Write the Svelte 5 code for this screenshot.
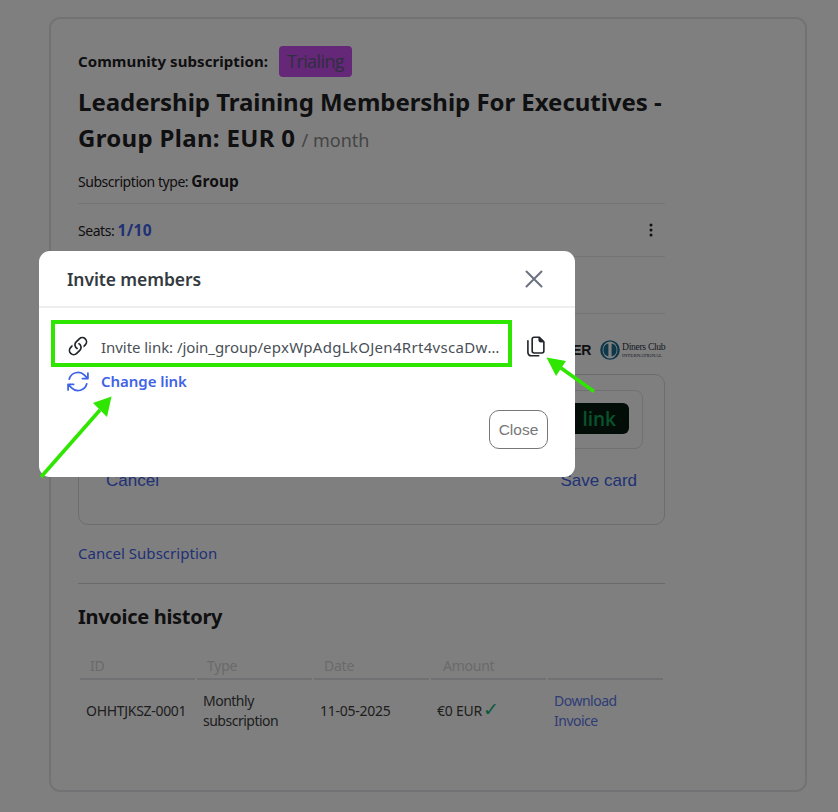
<script>
  const head = ['ID', 'Type', 'Date', 'Amount', ''];
</script>

<div class="page">
  <main class="card">
    <div class="status">
      <strong>Community subscription:</strong>
      <span class="badge">Trialing</span>
    </div>
    <h1>Leadership Training Membership For Executives - <span class="price">Group Plan: EUR 0</span> <small>/ month</small></h1>
    <p class="type">Subscription type: <strong>Group</strong></p>
    <div class="seats">
      <span>Seats: <a href="#seats">1/10</a></span>
      <svg class="dots" viewBox="0 0 4 14" width="4" height="14" aria-hidden="true"><circle cx="2" cy="2" r="1.5"/><circle cx="2" cy="7" r="1.5"/><circle cx="2" cy="12" r="1.5"/></svg>
    </div>
    <div class="blank"></div>
    <div class="brands">
      <span class="discover">DISCOVER</span>
      <span class="diners">
        <svg viewBox="0 0 22 20" width="22" height="20" aria-hidden="true">
          <circle cx="11" cy="10" r="9.8" fill="#1c6f93"/>
          <ellipse cx="11" cy="10" rx="7.4" ry="8.6" fill="#fff"/>
          <path d="M9.4 3.6a6.6 6.6 0 0 0 0 12.8zM12.6 3.6a6.6 6.6 0 0 1 0 12.8z" fill="#1c6f93"/>
        </svg>
        <span class="dtext"><b>Diners Club</b><i>INTERNATIONAL</i></span>
      </span>
    </div>
    <section class="pay">
      <div class="methods"><span class="bank">link</span></div>
      <div class="payactions"><a href="#c">Cancel</a><a href="#s">Save card</a></div>
    </section>
    <a class="cancelsub" href="#cancel">Cancel Subscription</a>
    <h2>Invoice history</h2>
    <table>
      <thead>
        <tr>{#each head as h}<th>{h}</th>{/each}</tr>
      </thead>
      <tbody>
        <tr>
          <td>OHHTJKSZ-0001</td>
          <td>Monthly subscription</td>
          <td>11-05-2025</td>
          <td>€0 EUR <span class="ok">✓</span></td>
          <td><a href="#d">Download Invoice</a></td>
        </tr>
      </tbody>
    </table>
  </main>

  <div class="scrim"></div>

  <div class="modal" role="dialog">
    <header>
      <span>Invite members</span>
      <svg viewBox="0 0 18 18" width="18" height="18" aria-hidden="true"><path d="M1.5 1.5l15 15M16.5 1.5l-15 15" fill="none" stroke="#6b7280" stroke-width="2" stroke-linecap="round"/></svg>
    </header>
    <div class="body">
      <div class="linkrow">
        <svg class="ico" viewBox="1.5 1.5 13 13" width="22" height="22" fill="#212529" aria-hidden="true">
          <path d="M4.715 6.542 3.343 7.914a3 3 0 1 0 4.243 4.243l1.828-1.829A3 3 0 0 0 8.586 5.5L8 6.086a1 1 0 0 0-.154.199 2 2 0 0 1 .861 3.337L6.88 11.45a2 2 0 1 1-2.83-2.83l.793-.792a4 4 0 0 1-.128-1.287z"/>
          <path d="M6.586 4.672A3 3 0 0 0 7.414 9.5l.775-.776a2 2 0 0 1-.896-3.346L9.12 3.55a2 2 0 1 1 2.83 2.83l-.793.792c.112.42.155.855.128 1.287l1.372-1.372a3 3 0 1 0-4.243-4.243z"/>
        </svg>
        <span class="url">Invite link: /join_group/<span class="token">epxWpAdgLkOJen4Rrt4vscaDwXq7mTzB</span></span>
        <svg class="copy" viewBox="0 0 20 22" width="19" height="21" fill="none" stroke="#212529" stroke-width="1.7" stroke-linejoin="round" aria-hidden="true">
          <path d="M8.5 1.2h5.3l5 5v9.6a2 2 0 0 1-2 2H8.5a2 2 0 0 1-2-2V3.2a2 2 0 0 1 2-2z"/>
          <path d="M13.6 1.4v3.4a1.4 1.4 0 0 0 1.4 1.4h3.6" fill="#212529" stroke-width="1"/>
          <path d="M2 5v12.4a3.4 3.4 0 0 0 3.4 3.4h8" stroke-linecap="round"/>
        </svg>
      </div>
      <a class="change" href="#change">
        <svg class="ico" viewBox="2 2.5 20 19" width="22" height="21" fill="none" stroke="#3f63e6" stroke-width="1.6" stroke-linecap="round" stroke-linejoin="round" aria-hidden="true">
          <path d="M16.023 9.348h4.992v-.001M2.985 19.644v-4.992m0 0h4.992m-4.993 0 3.181 3.183a8.25 8.25 0 0 0 13.803-3.7M4.031 9.865a8.25 8.25 0 0 1 13.803-3.7l3.181 3.182m0-4.991v4.99"/>
        </svg>
        Change link
      </a>
      <div class="foot"><button type="button">Close</button></div>
    </div>
  </div>

  <svg class="marks" viewBox="0 0 838 812" width="838" height="812" aria-hidden="true">
    <rect x="53" y="322" width="457" height="43" fill="none" stroke="#2ee600" stroke-width="4"/>
    <path d="M41 477L100 410" stroke="#2ee600" stroke-width="3.6"/>
    <polygon points="111.5,396.5 93,403 107,417" fill="#2ee600"/>
    <path d="M594 391.5L561 368" stroke="#2ee600" stroke-width="3.6"/>
    <polygon points="546.5,357.5 566,361 556,376" fill="#2ee600"/>
  </svg>
</div>

<style>
  :global(body) {
    margin: 0;
    background: #fff;
    font-family: "Noto Sans", "Open Sans", sans-serif;
    color: #1f2023;
  }
  .page {
    position: relative;
    width: 838px;
    height: 812px;
    overflow: hidden;
    padding: 17px 31px 0 49px;
    box-sizing: border-box;
  }
  .card {
    box-sizing: border-box;
    width: 758px;
    height: 775px;
    border: 2px solid #e4e5e8;
    border-radius: 11px;
    padding: 26px 140px 0 27px;
  }
  a { color: #4263eb; text-decoration: none; }
  .status {
    display: flex;
    align-items: center;
    gap: 11px;
    font-size: 15px;
    height: 32px;
    letter-spacing: 0.08px;
  }
  .status strong { font-weight: 700; }
  .badge {
    background: #ca4ef0;
    border-radius: 4px;
    height: 31px;
    padding: 0 8px;
    display: flex;
    align-items: center;
    font-size: 18px;
    color: #5f5f80;
    font-family: "Open Sans", sans-serif;
    letter-spacing: -0.6px;
  }
  h1 {
    margin: 7px 0 0;
    font-size: 24px;
    line-height: 36px;
    font-weight: 700;
    letter-spacing: -0.04px;
  }
  .price { letter-spacing: 0.32px; }
  h1 small {
    font-size: 18px;
    font-weight: 400;
    color: #8a8a8a;
    letter-spacing: 0;
    margin-left: 0;
  }
  .type {
    margin: 13px 0 0;
    font-size: 14px;
    line-height: 20px;
    letter-spacing: -0.45px;
  }
  .type strong { font-size: 15.5px; font-weight: 700; letter-spacing: 0; }
  .seats {
    margin-top: 11px;
    border-top: 1px solid #e8e8ea;
    border-bottom: 1px solid #e8e8ea;
    height: 54px;
    display: flex;
    align-items: center;
    justify-content: space-between;
    font-size: 14px;
    letter-spacing: -0.45px;
    padding-right: 12px;
    box-sizing: border-box;
  }
  .seats a { font-size: 15.5px; font-weight: 700; letter-spacing: 0.4px; }
  .dots { fill: #1f2023; }
  .blank { height: 56px; border-bottom: 1px solid #e8e8ea; }
  .brands {
    box-sizing: border-box;
    display: flex;
    justify-content: flex-end;
    align-items: center;
    gap: 8px;
    height: 60px;
    padding-top: 12px;
  }
  .discover {
    font-family: "Liberation Sans", sans-serif;
    font-weight: 700;
    font-size: 14px;
    color: #222;
    letter-spacing: -0.3px;
  }
  .diners { display: flex; align-items: center; gap: 1px; }
  .dtext {
    display: flex;
    flex-direction: column;
    font-family: "Liberation Serif", serif;
    color: #2b3a4a;
    line-height: 1;
    width: 43px;
  }
  .dtext b { font-weight: 400; font-size: 9.6px; white-space: nowrap; letter-spacing: -0.3px; }
  .dtext i { font-style: normal; font-size: 5px; white-space: nowrap; margin-top: 1px; letter-spacing: 0; }
  .pay {
    box-sizing: border-box;
    height: 151px;
    border: 1px solid #d8d9dc;
    border-radius: 10px;
    padding: 15px 21px 0;
  }
  .methods {
    height: 59px;
    box-sizing: border-box;
    border: 1px solid #e0e0e3;
    border-radius: 8px;
    display: flex;
    justify-content: flex-end;
    align-items: center;
    padding-right: 13px;
    padding-bottom: 2px;
  }
  .bank {
    box-sizing: border-box;
    width: 110px;
    height: 31px;
    border-radius: 6px;
    background: #041a10;
    color: #14a558;
    font: 600 19px "Open Sans", sans-serif;
    display: flex;
    align-items: center;
    justify-content: flex-end;
    padding-right: 13px;
  }
  .payactions {
    display: flex;
    justify-content: space-between;
    margin-top: 22px;
    padding: 0 6px;
    font: 17px "Liberation Sans", sans-serif;
  }
  .cancelsub {
    display: block;
    margin-top: 17px;
    font-size: 15px;
    line-height: 22px;
    letter-spacing: 0.03px;
    padding-bottom: 19px;
    border-bottom: 1px solid #d5d6d9;
  }
  h2 {
    margin: 18px 0 0;
    font-size: 20px;
    line-height: 30px;
    font-weight: 700;
    letter-spacing: -0.3px;
  }
  table {
    margin-top: 19px;
    width: 100%;
    table-layout: fixed;
    border-collapse: separate;
    border-spacing: 2px;
    font-size: 14px;
    letter-spacing: -0.25px;
  }
  th {
    text-align: left;
    font-weight: 400;
    color: #d4d4d4;
    padding: 3px 10px 2px;
    line-height: 20px;
    border-bottom: 2px solid #e2e3e6;
  }
  th:nth-child(4) { padding-left: 12px; }
  td {
    padding: 9px 6px 7px;
    line-height: 20px;
    color: #3d3d3d;
    letter-spacing: -0.5px;
  }
  td:nth-child(1) { white-space: nowrap; letter-spacing: -0.3px; }
  td:nth-child(3), td:nth-child(4) { letter-spacing: -0.25px; }
  td a { opacity: 0.85; }
  .ok { color: #12b47a; font-size: 19px; line-height: 0; margin-left: -2px; }
  .scrim {
    position: absolute;
    inset: 0;
    background: rgba(0, 0, 0, 0.5);
  }
  .modal {
    position: absolute;
    left: 39px;
    top: 251px;
    width: 536px;
    height: 226px;
    background: #fff;
    border-radius: 11px;
    box-sizing: border-box;
  }
  header {
    height: 57px;
    box-sizing: border-box;
    border-bottom: 2px solid #eeeeef;
    display: flex;
    align-items: center;
    justify-content: space-between;
    padding: 1px 32px 0 28px;
    font-size: 17.5px;
    font-weight: 600;
    color: #343a40;
    letter-spacing: -0.1px;
  }
  .body { padding: 20px 27px 0 28px; }
  .linkrow {
    display: flex;
    align-items: center;
    height: 38px;
    font-size: 15px;
    color: #495057;
    letter-spacing: -0.05px;
  }
  .ico { flex: none; margin-right: 12px; }
  .url {
    width: 399px;
    overflow: hidden;
    white-space: nowrap;
    text-overflow: ellipsis;
  }
  .token { letter-spacing: 0.3px; }
  .copy { flex: none; margin-left: 26px; margin-top: -1px; }
  .change {
    display: flex;
    align-items: center;
    height: 30px;
    font-size: 15px;
    font-weight: 600;
    color: #3f63e6;
    letter-spacing: -0.05px;
  }
  .foot {
    display: flex;
    justify-content: flex-end;
    margin-top: 14px;
  }
  button {
    width: 59px;
    height: 39px;
    background: #fff;
    border: 1px solid #777;
    border-radius: 10px;
    color: #777;
    font: 15.5px "Liberation Sans", sans-serif;
    padding: 0;
  }
  .marks { position: absolute; inset: 0; pointer-events: none; }
</style>
